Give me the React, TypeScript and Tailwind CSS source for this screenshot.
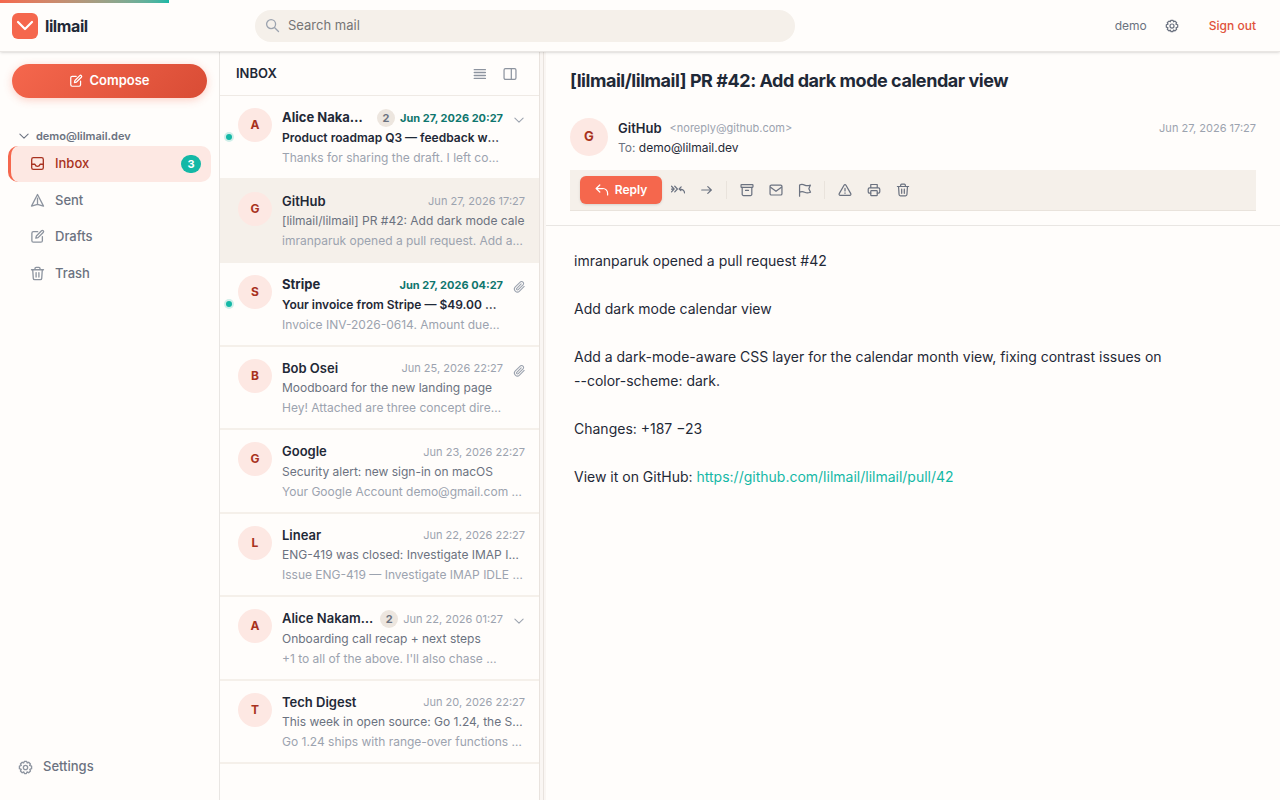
import type { ReactNode } from "react";

const iconPaths: Record<string, ReactNode> = {
  search: (
    <>
      <circle cx="6.5" cy="6.5" r="4.8" />
      <path d="M10.1 10.1 14.4 14.4" />
    </>
  ),
  edit: (
    <>
      <path d="M8.2 2.8H3.6A1.6 1.6 0 0 0 2 4.400v8A1.600 1.600 0 0 0 3.600 14h8a1.600 1.600 0 0 0 1.600-1.600V8.200" />
      <path d="M12.300 1.900a1.250 1.250 0 0 1 1.800 1.800L8.600 9.200l-2.400.6.6-2.400z" />
    </>
  ),
  inbox: (
    <>
      <rect x="1.800" y="1.800" width="12.400" height="12.400" rx="1.800" />
      <path d="M1.800 8.800h3.400c.5 1.600 1.500 2.300 2.800 2.300s2.300-.7 2.800-2.300h3.400" />
    </>
  ),
  sent: <path d="M8 1.600 14.400 14 8 12.200 1.600 14zM8 5.500v6.700" />,
  trash: (
    <>
      <path d="M1.600 4h12.800M5.300 4V2.600a1.200 1.200 0 0 1 1.200-1.200h3a1.200 1.200 0 0 1 1.200 1.200V4" />
      <path d="m2.900 4 .6 9.200a1.500 1.500 0 0 0 1.500 1.400h6a1.500 1.500 0 0 0 1.500-1.400l.6-9.200M6.500 7v4.800M9.500 7v4.800" />
    </>
  ),
  gear: (
    <>
      <circle cx="8" cy="8" r="2.300" />
      <path d="M6.700 1.500h2.600l.5 1.700 1.600-.8 1.900 1.900-.9 1.500 2.100.8v2.700l-1.900.7.7 1.700-1.900 1.900-1.700-.9-.8 1.800H6.900l-.7-1.800-1.700.9-1.900-1.900.8-1.700-1.900-.7V6.600l2-.8-.9-1.500 1.900-1.900 1.600.8z" />
    </>
  ),
  chevron: <path d="m2.500 5.500 5.500 5.300 5.500-5.300" />,
  lines: <path d="M1.500 3h12.600M1.500 6.300h12.600M1.500 9.700h12.600M1.500 13h12.600" strokeWidth="1.700" />,
  columns: (
    <>
      <rect x="1.200" y="1.800" width="13.600" height="12.400" rx="1.600" />
      <path d="M9.500 1.800v12.400" />
    </>
  ),
  clip: (
    <path d="m14.900 7.300-6.200 6.200a3.900 3.900 0 0 1-5.600-5.600l6.500-6.500a2.700 2.700 0 0 1 3.800 3.800l-6.400 6.400a1.300 1.300 0 0 1-1.900-1.900l5.800-5.800" />
  ),
  reply: <path d="M5.500 2.300 1.300 6.300l4.200 4M1.300 6.300H9a5.300 5.300 0 0 1 5.400 5.300v2" />,
  replyAll: <path d="m.6 3.700 3 3.200-3 3.200M4.300 3.700l3 3.200-3 3.200M.6 6.900h3M11.600 4.500 9.300 6.900l2 1.800M9.300 6.900c3.800 0 6 1.600 6.200 4.400" />,
  forward: <path d="M2 8h11M8.900 4.200 12.900 8l-4 3.800" />,
  archive: (
    <>
      <rect x="1.200" y="1.800" width="13.600" height="3.200" rx=".6" />
      <path d="M2.500 5v7.800a1.500 1.500 0 0 0 1.500 1.500h8a1.500 1.500 0 0 0 1.500-1.500V5M6.300 8.500h3.400" />
    </>
  ),
  mail: (
    <>
      <rect x="1.200" y="2.300" width="13.600" height="11.400" rx="1.500" />
      <path d="m1.800 4.800 6.200 4.700 6.200-4.700" />
    </>
  ),
  flag: <path d="M1.800 15V2.300c2-1.100 3.800-.9 5.800.1s4 .9 6.600 0l-1.800 4.100 1.900 4.100c-2.700.9-4.700.9-6.700 0s-3.800-1-5.800 0" />,
  warning: (
    <>
      <path d="M6.900 2.500a1.250 1.250 0 0 1 2.200 0l5.500 9.700a1.250 1.250 0 0 1-1.100 1.900h-11a1.250 1.250 0 0 1-1.100-1.900zM8 6.200v2.900" />
      <path d="M8 11.400v.4" />
    </>
  ),
  print: (
    <>
      <path d="M4.300 5.500V1.700h7.400v3.800M4.300 11.500H2.800a1.400 1.400 0 0 1-1.400-1.400V7a1.500 1.500 0 0 1 1.500-1.500h10.200A1.500 1.500 0 0 1 14.600 7v3.100a1.400 1.400 0 0 1-1.400 1.400h-1.500" />
      <rect x="4.300" y="8.800" width="7.400" height="5.700" rx=".8" />
    </>
  ),
};

function Icon({ name, className = "size-[14px]" }: { name: string; className?: string }) {
  return (
    <svg
      viewBox="0 0 16 16"
      fill="none"
      stroke="currentColor"
      strokeWidth="1.4"
      strokeLinecap="round"
      strokeLinejoin="round"
      aria-hidden="true"
      className={`shrink-0 ${className}`}
    >
      {iconPaths[name]}
    </svg>
  );
}

const folders = [
  { name: "Inbox", icon: "inbox", unread: 3 },
  { name: "Sent", icon: "sent" },
  { name: "Drafts", icon: "edit" },
  { name: "Trash", icon: "trash" },
];

type Message = {
  from: string;
  date: string;
  subject: string;
  preview: string;
  count?: number;
  unread?: boolean;
  attachment?: boolean;
  selected?: boolean;
};

const messages: Message[] = [
  { from: "Alice Nakamura", date: "Jun 27, 2026 20:27", subject: "Product roadmap Q3 — feedback wanted", preview: "Thanks for sharing the draft. I left comments", count: 2, unread: true },
  { from: "GitHub", date: "Jun 27, 2026 17:27", subject: "[lilmail/lilmail] PR #42: Add dark mode calendar view", preview: "imranparuk opened a pull request. Add a dark-mode", selected: true },
  { from: "Stripe", date: "Jun 27, 2026 04:27", subject: "Your invoice from Stripe — $49.00 paid", preview: "Invoice INV-2026-0614. Amount due: $49.00", unread: true, attachment: true },
  { from: "Bob Osei", date: "Jun 25, 2026 22:27", subject: "Moodboard for the new landing page", preview: "Hey! Attached are three concept directions", attachment: true },
  { from: "Google", date: "Jun 23, 2026 22:27", subject: "Security alert: new sign-in on macOS", preview: "Your Google Account demo@gmail.com was used" },
  { from: "Linear", date: "Jun 22, 2026 22:27", subject: "ENG-419 was closed: Investigate IMAP IDLE", preview: "Issue ENG-419 — Investigate IMAP IDLE reconnects" },
  { from: "Alice Nakamura", date: "Jun 22, 2026 01:27", subject: "Onboarding call recap + next steps", preview: "+1 to all of the above. I'll also chase down", count: 2 },
  { from: "Tech Digest", date: "Jun 20, 2026 22:27", subject: "This week in open source: Go 1.24, the State", preview: "Go 1.24 ships with range-over functions and more" },
];

function MessageRow({ message }: { message: Message }) {
  const { unread, selected } = message;
  const side = message.count || message.attachment;

  return (
    <li
      className={`relative flex gap-[10px] border-b-2 border-[#f5f0ea] pt-3 pr-[14px] pb-[10px] pl-[18px] ${selected ? "bg-[#f5f0ea]" : ""}`}
    >
      {unread && (
        <span className="absolute top-[38px] left-[6px] size-[6px] rounded-full bg-[#14b8a6] ring-2 ring-[#14b8a6]/20" />
      )}
      <span className="flex size-[34px] shrink-0 items-center justify-center rounded-full bg-[#fde8e3] text-xs font-bold text-[#a83220]">
        {message.from[0]}
      </span>
      <div className="min-w-0 flex-1">
        <div className="flex items-center">
          <span className={`min-w-0 flex-1 truncate text-[13px] leading-normal text-[#1f2937] ${unread ? "font-bold" : "font-semibold"}`}>
            {message.from}
          </span>
          {message.count && (
            <span className="mr-[5px] ml-1 flex size-[18px] items-center justify-center rounded-full bg-[#ede6df] text-[11px] font-bold text-[#6b7280]">
              {message.count}
            </span>
          )}
          <span className={`text-[11px] whitespace-nowrap ${unread ? "font-bold text-[#0f766e]" : "text-[#9ca3af]"}`}>
            {message.date}
          </span>
        </div>
        <p
          className={`overflow-hidden text-[12px] leading-[20px] whitespace-nowrap ${selected ? "" : "text-ellipsis"} ${unread ? "font-semibold text-[#1f2937]" : "text-[#6b7280]"}`}
        >
          {message.subject}
        </p>
        <p className="truncate text-[12px] leading-[20px] text-[#9ca3af]">{message.preview}</p>
      </div>
      {side && (
        <button
          aria-label={message.count ? "Expand thread" : "Attachment"}
          className="mt-[6px] h-3 w-3 shrink-0 text-[#9ca3af]"
        >
          <Icon name={message.count ? "chevron" : "clip"} className="size-3" />
        </button>
      )}
    </li>
  );
}

function ToolButton({ icon, label }: { icon: string; label: string }) {
  return (
    <button aria-label={label} className="flex h-7 w-[27px] items-center justify-center rounded-md text-[#6b7280]">
      <Icon name={icon} />
    </button>
  );
}

function Separator() {
  return <span className="mx-1 h-[18px] w-px bg-[#e9e3dc]" />;
}

function Header() {
  return (
    <header className="relative z-10 flex h-[52px] shrink-0 items-center border-b border-[#e9e6e3] bg-[#fffdfb] pr-6 pl-3 shadow-sm">
      <div className="absolute top-0 left-0 h-[3px] w-[169px] bg-linear-to-r from-[#f5674d] to-[#14b8a6]" />
      <a href="#" className="flex w-[243px] shrink-0 items-center gap-[7px]">
        <svg viewBox="0 0 26 26" className="size-[26px]" aria-hidden="true">
          <rect width="26" height="26" rx="6" fill="#f5674d" />
          <path d="m6 9 7 7 7-7" fill="none" stroke="#fff" strokeWidth="2.200" strokeLinecap="round" strokeLinejoin="round" />
        </svg>
        <span className="text-base font-bold tracking-tight text-[#1f2937]">lilmail</span>
      </a>
      <label className="flex h-8 max-w-[540px] flex-1 items-center gap-2 rounded-full bg-[#f5f0ea] px-[10px] text-[#9ca3af]">
        <Icon name="search" className="size-[15px]" />
        <input
          type="search"
          aria-label="Search mail"
          placeholder="Search mail"
          className="min-w-0 flex-1 bg-transparent text-[13px] text-[#1f2937] outline-none placeholder:text-[#757575]"
        />
      </label>
      <div className="ml-auto flex items-center text-[#6b7280]">
        <span className="text-xs">demo</span>
        <button aria-label="Settings" className="ml-[18px]">
          <Icon name="gear" />
        </button>
        <button className="ml-[30px] text-xs font-medium text-[#e0523a]">Sign out</button>
      </div>
    </header>
  );
}

function Sidebar() {
  return (
    <aside className="flex w-[220px] shrink-0 flex-col border-r border-[#e9e6e3] px-2 pt-3 pb-[15px]">
      <button className="mx-1 flex h-[34px] shrink-0 items-center justify-center gap-[6px] rounded-full bg-linear-135 from-[#f5674d] to-[#d94c35] text-[13px] font-semibold text-white shadow-[0_2px_8px_rgba(245,103,77,0.3)]">
        <Icon name="edit" />
        Compose
      </button>
      <button className="mt-7 flex h-5 items-center gap-[6px] pl-[10px] text-[11px] font-semibold text-[#6b7280]">
        <Icon name="chevron" className="size-3" />
        demo@lilmail.dev
      </button>
      <nav className="flex flex-col gap-px">
        {folders.map((folder) => (
          <a
            key={folder.name}
            href="#"
            className={`flex items-center gap-[10px] rounded-[10px] border-l-3 py-2 pr-[10px] pl-[19px] text-[13px] leading-normal font-medium ${
              folder.unread ? "border-[#f5674d] bg-[#fde8e3] text-[#a83220]" : "border-transparent text-[#6b7280]"
            }`}
          >
            <Icon name={folder.icon} className={folder.unread ? "size-[15px]" : "size-[15px] text-[#8d949f]"} />
            <span className="flex-1">{folder.name}</span>
            {folder.unread && (
              <span className="flex h-[18px] w-5 items-center justify-center rounded-full bg-[#14b8a6] text-[11px] font-bold text-white">
                {folder.unread}
              </span>
            )}
          </a>
        ))}
      </nav>
      <a href="#" className="mt-auto flex h-9 items-center gap-[10px] pl-[10px] text-[13px] font-medium text-[#6b7280]">
        <Icon name="gear" className="size-[15px] text-[#8d949f]" />
        Settings
      </a>
    </aside>
  );
}

function MessageList() {
  return (
    <section className="flex w-80 shrink-0 flex-col border-r border-[#e9e3de]">
      <div className="flex h-11 shrink-0 items-center border-b border-[#efeae5] pr-[22px] pl-4">
        <h2 className="flex-1 text-[13px] font-semibold text-[#1f2937]">INBOX</h2>
        <button aria-label="Density" className="text-[#8d949f]">
          <Icon name="lines" />
        </button>
        <button aria-label="Toggle reading pane" className="ml-4 text-[#8d949f]">
          <Icon name="columns" />
        </button>
      </div>
      <ul className="min-h-0 flex-1 overflow-y-auto">
        {messages.map((message, i) => (
          <MessageRow key={i} message={message} />
        ))}
      </ul>
    </section>
  );
}

function Reader() {
  return (
    <main className="min-w-0 flex-1">
      <div className="border-b border-[#e9e6e3] px-6 pt-[15px] pb-[14px]">
        <h1 className="text-lg leading-[28px] font-bold tracking-tight text-[#1f2937]">
          [lilmail/lilmail] PR #42: Add dark mode calendar view
        </h1>
        <div className="mt-[23px] flex gap-[10px]">
          <span className="flex size-[38px] items-center justify-center rounded-full bg-[#fde8e3] text-[13px] font-bold text-[#a83220]">
            G
          </span>
          <div className="flex-1">
            <div className="flex items-center leading-[20px]">
              <span className="text-[13px] font-semibold text-[#1f2937]">GitHub</span>
              <span className="ml-2 text-[11px] text-[#9ca3af]">&lt;noreply@github.com&gt;</span>
              <time className="ml-auto text-[11px] text-[#9ca3af]">Jun 27, 2026 17:27</time>
            </div>
            <p className="text-xs leading-[20px] text-[#6b7280]">
              To: <span className="text-[#1f2937]">demo@lilmail.dev</span>
            </p>
          </div>
        </div>
        <div className="mt-3 flex items-center gap-[2px] border-b border-[#e9e3dc] bg-[#f5f0ea] px-[10px] py-[6px]">
          <button className="flex h-7 w-[82px] items-center justify-center gap-[6px] rounded-md bg-[#f5674d] text-xs font-semibold text-white shadow-sm">
            <Icon name="reply" />
            Reply
          </button>
          <ToolButton icon="replyAll" label="Reply all" />
          <ToolButton icon="forward" label="Forward" />
          <Separator />
          <ToolButton icon="archive" label="Archive" />
          <ToolButton icon="mail" label="Mark as unread" />
          <ToolButton icon="flag" label="Flag" />
          <Separator />
          <ToolButton icon="warning" label="Report spam" />
          <ToolButton icon="print" label="Print" />
          <ToolButton icon="trash" label="Delete" />
        </div>
      </div>
      <article className="space-y-6 px-7 py-[23px] text-sm leading-6 text-[#1f2937]">
        <p>imranparuk opened a pull request #42</p>
        <p>Add dark mode calendar view</p>
        <p>
          Add a dark-mode-aware CSS layer for the calendar month view, fixing contrast issues on
          <br />
          --color-scheme: dark.
        </p>
        <p>Changes: +187 −23</p>
        <p>
          View it on GitHub:{" "}
          <a href="https://github.com/lilmail/lilmail/pull/42" className="text-[#14b8a6]">
            https://github.com/lilmail/lilmail/pull/42
          </a>
        </p>
      </article>
    </main>
  );
}

export default function App() {
  return (
    <div className="flex h-screen flex-col bg-[#fffdfb] font-[Inter,sans-serif] text-[#1f2937]">
      <Header />
      <div className="flex min-h-0 flex-1">
        <Sidebar />
        <MessageList />
        <div className="w-[6px] shrink-0 bg-[#faf6f3]">
          <div className="h-full w-1 border-r border-[#e9e3de]" />
        </div>
        <Reader />
      </div>
    </div>
  );
}
